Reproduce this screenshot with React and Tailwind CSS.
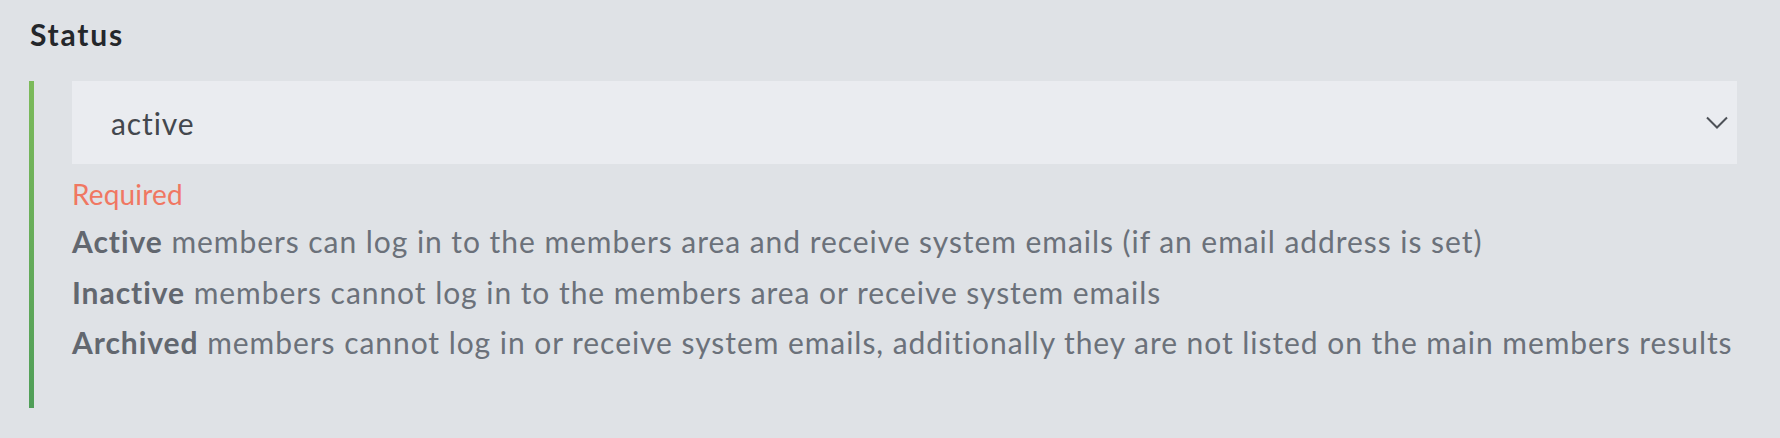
export default function App() {
  const body = "text-[30px] leading-[50.5px] tracking-[0.95px] whitespace-nowrap";
  return (
    <div className="bg-[#dfe2e6] w-full min-h-[438px] pl-[29px] pr-[43px] pt-[16px]" style={{ fontFamily: "Lato, 'Open Sans', sans-serif" }}>
      <div className="text-[30px] leading-[36px] font-bold tracking-[1.8px] text-[#24272b] pl-px">Status</div>
      <div className="mt-[29px] flex">
        <div className="w-[5px] shrink-0 bg-gradient-to-b from-[#7cba5a] to-[#4f9e58]" />
        <div className="flex-1 pl-[38px] pb-[40px]">
          <div className="h-[83px] bg-[#eaecf0] flex items-center justify-between pl-[39px] pr-[9px]">
            <span className="text-[30px] leading-[30px] tracking-[0.9px] text-[#43474d]">active</span>
            <svg width="22" height="13" viewBox="0 0 22 13" fill="none">
              <path d="M1 1.5 L11 11.5 L21 1.5" stroke="#4d5157" strokeWidth="2" />
            </svg>
          </div>
          <div className="mt-[9px] text-[28px] leading-[43px] tracking-[0.15px] text-[#f07762]">Required</div>
          <div className="text-[#6b717a]">
            <div className={body}><b className="font-bold text-[#62676f]">Active</b> members can log in to the members area and receive system emails (if an email address is set)</div>
            <div className={body}><b className="font-bold text-[#62676f]">Inactive</b> members cannot log in to the members area or receive system emails</div>
            <div className={body}><b className="font-bold text-[#62676f]">Archived</b> members cannot log in or receive system emails, additionally they are not listed on the main members results</div>
          </div>
        </div>
      </div>
    </div>
  );
}
